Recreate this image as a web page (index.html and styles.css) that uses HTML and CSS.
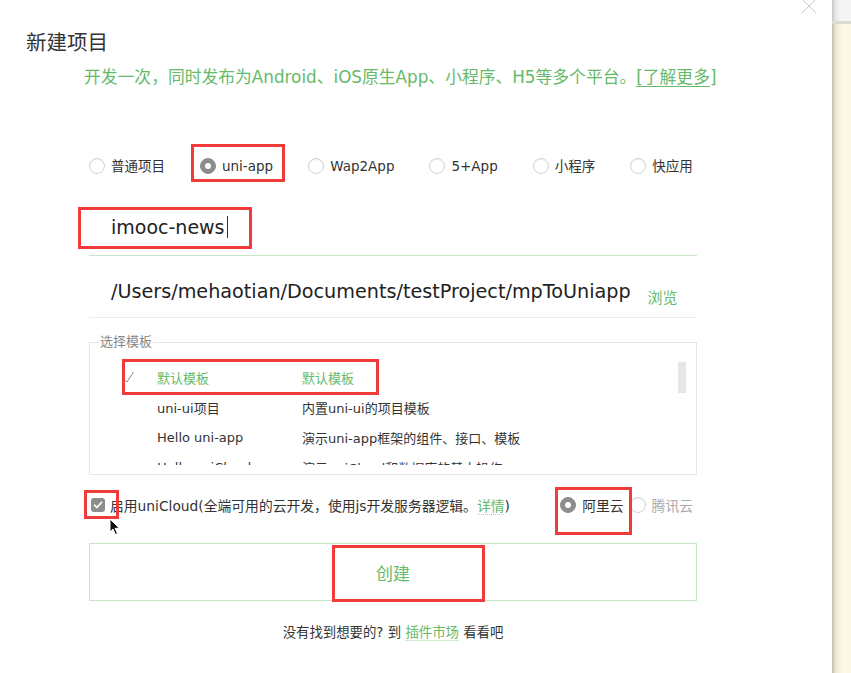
FILE: index.html
```html
<!DOCTYPE html>
<html lang="zh">
<head>
<meta charset="utf-8">
<title>新建项目</title>
<link rel="stylesheet" href="styles.css">
</head>
<body>
<div class="page">
  <div class="dialog">
    <h1 class="title">新建项目</h1>
    <p class="subtitle">开发一次，同时发布为Android、iOS原生App、小程序、H5等多个平台。<span class="more">[了解更多</span>]</p>

    <div class="types">
      <label class="opt"><span class="radio"></span>普通项目</label>
      <label class="opt"><span class="radio on"></span>uni-app</label>
      <label class="opt"><span class="radio"></span>Wap2App</label>
      <label class="opt"><span class="radio"></span>5+App</label>
      <label class="opt"><span class="radio"></span>小程序</label>
      <label class="opt"><span class="radio"></span>快应用</label>
    </div>

    <div class="form">
      <div class="field name">imooc-news<span class="caret"></span></div>
      <div class="field path"><span>/Users/mehaotian/Documents/testProject/mpToUniapp</span><span class="browse">浏览</span></div>

      <fieldset class="templates">
        <legend>选择模板</legend>
        <div class="list-wrap">
          <div class="list">
            <div class="row sel">
              <span class="check"><svg width="10" height="13" viewBox="0 0 10 13"><path d="M0.5 9.5 L2 11 L8.5 1" fill="none" stroke="#8a8a8a" stroke-width="1"/></svg></span>
              <span class="tname">默认模板</span><span class="tdesc">默认模板</span>
            </div>
            <div class="row"><span class="check"></span><span class="tname">uni-ui项目</span><span class="tdesc">内置uni-ui的项目模板</span></div>
            <div class="row"><span class="check"></span><span class="tname">Hello uni-app</span><span class="tdesc">演示uni-app框架的组件、接口、模板</span></div>
            <div class="row"><span class="check"></span><span class="tname">Hello uniCloud</span><span class="tdesc">演示uniCloud和数据库的基本操作</span></div>
          </div>
          <div class="track"><div class="thumb"></div></div>
        </div>
      </fieldset>

      <div class="cloud-row">
        <div class="cloud-left">
          <span class="cb"><svg width="14" height="14" viewBox="0 0 14 14"><path d="M3.5 7.2 L6 9.6 L10.6 4.2" fill="none" stroke="#fff" stroke-width="1.6" stroke-linecap="round" stroke-linejoin="round"/></svg></span>
          <span>启用uniCloud(全端可用的云开发，使用js开发服务器逻辑。<span class="dlink">详情</span>)</span>
        </div>
        <div class="cloud-right">
          <span class="radio on"></span><span>阿里云</span>
          <span class="radio"></span><span class="muted">腾讯云</span>
        </div>
      </div>

      <button class="create">创建</button>
      <p class="footer">没有找到想要的? 到 <span class="ulink">插件市场</span> 看看吧</p>
    </div>

    <svg class="close" width="16" height="16" viewBox="0 0 16 16"><path d="M1 1 L15 15 M15 1 L1 15" stroke="#c9c9c9" stroke-width="1"/></svg>

    <div class="mark m-uniapp"></div>
    <div class="mark m-name"></div>
    <div class="mark m-tpl"></div>
    <div class="mark m-cb"></div>
    <div class="mark m-ali"></div>
    <div class="mark m-create"></div>

    <svg class="cursor" width="12" height="18" viewBox="0 0 12 18"><path d="M1 1 L1 14 L4 11 L6.5 16.5 L8.5 15.6 L6.2 10.3 L10.5 10.3 Z" fill="#111" stroke="#fff" stroke-width="1"/></svg>
  </div>
  <div class="side"><div class="side-top"></div></div>
</div>
</body>
</html>
```

FILE: styles.css
```css
html, body {
  margin: 0;
  padding: 0;
}
body {
  width: 851px;
  height: 673px;
  overflow: hidden;
  font-family: "DejaVu Sans", "Noto Sans CJK SC", sans-serif;
  color: #333;
  background: #fff;
}
.page {
  display: flex;
  height: 673px;
}
.dialog {
  width: 832px;
  position: relative;
  background: #fff;
  overflow: hidden;
}
.side {
  flex: 1;
  display: flex;
  flex-direction: column;
  background: linear-gradient(to right, #b8b5ab 0, #cdcabe 1px, #e6e2cf 3px, #f5f0da 6px, #fcf8e7 12px);
}
.side-top {
  height: 21px;
  background: linear-gradient(to right, #c4c4c4 0, #e4e4e4 3px, #f5f5f5 8px);
  border-bottom: 3px solid #dedbd0;
}

.title {
  margin: 0;
  padding: 31px 0 0 26px;
  font-size: 20.5px;
  line-height: 24px;
  font-weight: normal;
  color: #333;
}
.subtitle {
  margin: 12px 0 0;
  padding-left: 84px;
  font-size: 16.8px;
  line-height: 20px;
  color: #66ba69;
  white-space: nowrap;
}
.more {
  text-decoration: underline;
  text-underline-offset: 3px;
}

.types {
  display: flex;
  gap: 35px;
  margin-top: 69px;
  padding-left: 89px;
  height: 20px;
  font-size: 13.5px;
  line-height: 20px;
  color: #333;
}
.opt {
  display: flex;
  align-items: center;
  gap: 6px;
}
.radio {
  width: 16px;
  height: 16px;
  box-sizing: border-box;
  border-radius: 50%;
  border: 1px solid #d2d2d2;
  background: #fff;
  box-shadow: inset 0 1px 1px rgba(0, 0, 0, 0.06);
  flex: none;
}
.radio.on {
  background: #8d8d8d;
  border-color: #8d8d8d;
  display: flex;
  align-items: center;
  justify-content: center;
  box-shadow: none;
}
.radio.on::after {
  content: "";
  width: 6px;
  height: 6px;
  border-radius: 50%;
  background: #fff;
}

.form {
  margin: 24px 0 0 89px;
  width: 608px;
}
.field.name {
  height: 55px;
  line-height: 55px;
  padding-left: 22px;
  border-bottom: 1px solid #c8e5c8;
  font-size: 19px;
  color: #222;
}
.caret {
  display: inline-block;
  width: 1px;
  height: 22px;
  background: #333;
  vertical-align: middle;
  margin-left: 2px;
  margin-top: -4px;
}
.field.path {
  display: flex;
  align-items: center;
  height: 51px;
  padding-top: 10px;
  padding-left: 22px;
  border-bottom: 1px solid #ececec;
  font-size: 19.2px;
  color: #222;
  white-space: nowrap;
}
.browse {
  font-size: 15px;
  color: #66ba69;
  margin-left: 17px;
  margin-top: 10px;
}

.templates {
  margin: 17px 0 0;
  padding: 13px 10px 9px 0;
  border: 1px solid #e6e6e6;
  min-width: 0;
}
.templates legend {
  margin-left: 9px;
  padding: 0 1px;
  font-size: 13px;
  line-height: 14px;
  color: #888;
}
.list-wrap {
  display: flex;
  height: 103px;
  overflow: hidden;
}
.list {
  flex: 1;
  padding-left: 35px;
  font-size: 13px;
  color: #333;
}
.row {
  display: flex;
  align-items: center;
  height: 30px;
  white-space: nowrap;
}
.row.sel {
  color: #66ba69;
}
.check {
  width: 32px;
  display: flex;
  align-items: center;
}
.tname {
  width: 145px;
}
.track {
  width: 8px;
}
.thumb {
  height: 31px;
  background: #e6e6e6;
}

.cloud-row {
  display: flex;
  justify-content: space-between;
  align-items: center;
  height: 20px;
  margin-top: 20px;
  padding: 0 4px 0 2px;
  font-size: 13.8px;
  white-space: nowrap;
}
.cloud-left {
  display: flex;
  align-items: center;
  gap: 5px;
}
.cb {
  width: 14px;
  height: 14px;
  border-radius: 3px;
  background: #8d8d8d;
  display: flex;
}
.dlink {
  color: #66ba69;
  border-bottom: 1px dotted #a9d8ab;
}
.cloud-right {
  display: flex;
  align-items: center;
  gap: 6px;
}
.muted {
  color: #aaa;
}

.create {
  display: block;
  width: 608px;
  height: 58px;
  margin-top: 28px;
  border: 1.5px solid #c6e5c6;
  background: #fff;
  color: #66ba69;
  font-family: inherit;
  font-size: 17px;
  padding: 0;
}
.footer {
  margin: 22px 0 0;
  text-align: center;
  font-size: 13.4px;
  line-height: 20px;
  color: #333;
}
.ulink {
  color: #66ba69;
  border-bottom: 1px solid #cfe9cf;
}

.close {
  position: absolute;
  left: 801px;
  top: -2px;
}
.mark {
  position: absolute;
  box-sizing: border-box;
  border: 3px solid #f13a3a;
}
.m-uniapp { left: 191px; top: 144px; width: 94px; height: 38px; }
.m-name { left: 78px; top: 207px; width: 174px; height: 42px; }
.m-tpl { left: 122px; top: 359px; width: 257px; height: 36px; }
.m-cb { left: 84px; top: 490px; width: 35px; height: 29px; }
.m-ali { left: 555px; top: 487px; width: 77px; height: 48px; }
.m-create { left: 332px; top: 545px; width: 153px; height: 57px; }
.cursor {
  position: absolute;
  left: 109px;
  top: 518px;
}
```
